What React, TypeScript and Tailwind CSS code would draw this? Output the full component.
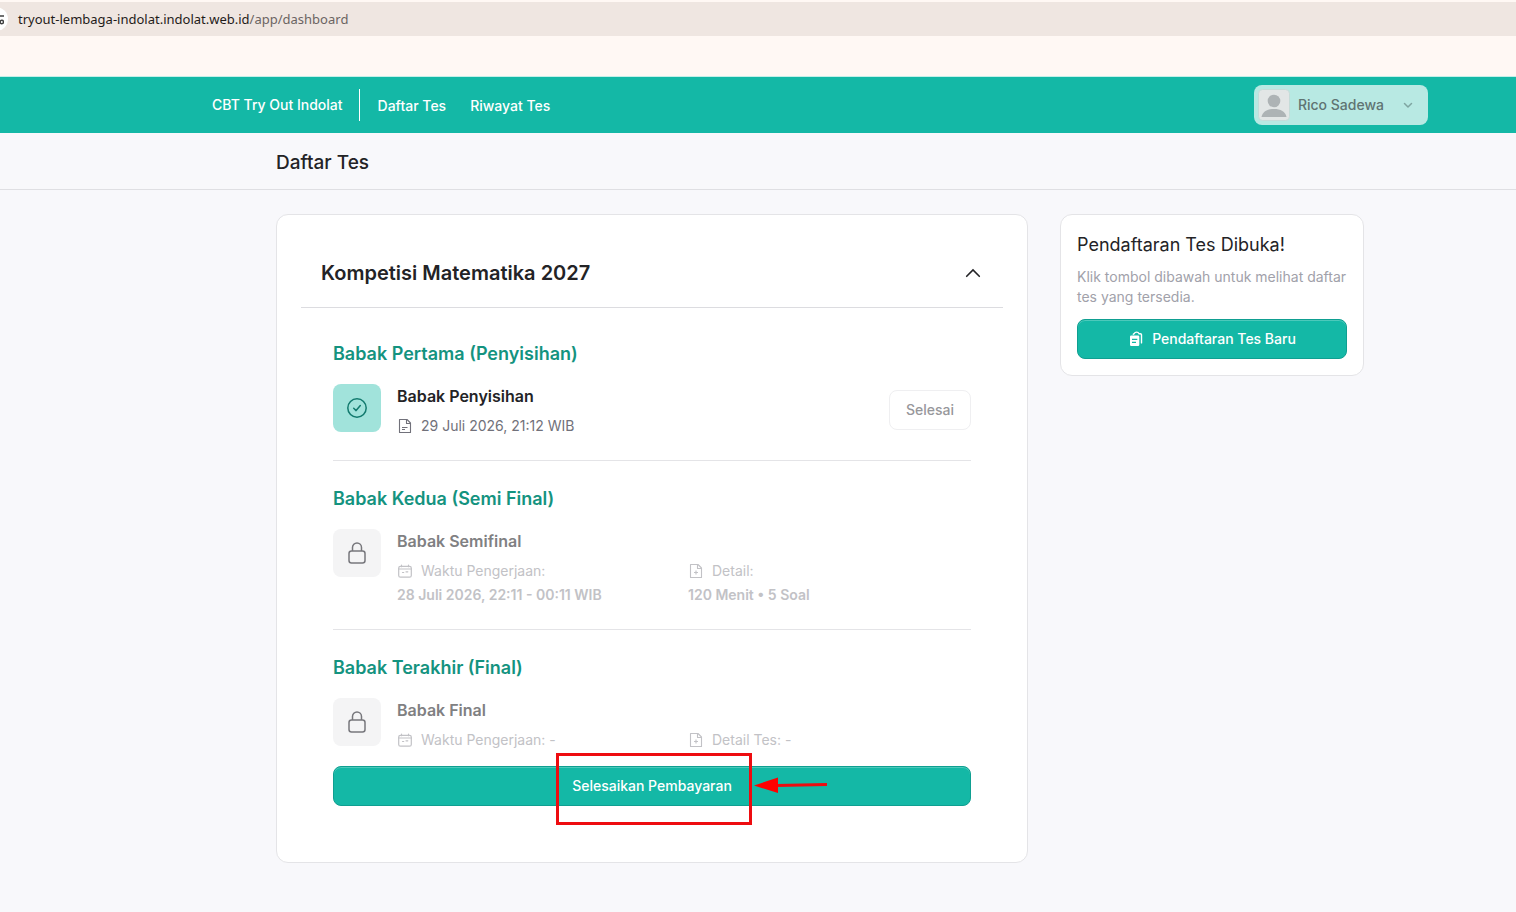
import type { ReactNode } from "react";

type Detail = {
  icon: ReactNode;
  label: string;
  value?: string;
};

type LockedRoundProps = {
  title: string;
  name: string;
  details: Detail[];
  children?: ReactNode;
};

const avatarPlaceholder = (
  <svg viewBox="0 0 32 32" aria-hidden="true" className="h-8 w-8">
    <rect x="0.5" y="0.5" width="31" height="31" rx="4" fill="#e2e6e6" stroke="#c5dcd9" />
    <circle cx="16" cy="12" r="6.3" fill="#adb3b5" />
    <path d="M3.5 28c1-5.5 6-8 12.500-8s11.500 2.500 12.500 8z" fill="#adb3b5" />
  </svg>
);

const checkIcon = (
  <svg viewBox="0 0 24 24" fill="none" stroke="currentColor" strokeWidth="1.5" aria-hidden="true" className="h-6 w-6">
    <circle cx="12" cy="12" r="9.2" />
    <path d="M8.700 12.300l2.400 2.300 4.200-5" strokeLinecap="round" strokeLinejoin="round" />
  </svg>
);

const lockIcon = (
  <svg viewBox="0 0 24 24" fill="none" stroke="currentColor" strokeWidth="1.5" aria-hidden="true" className="h-6 w-6">
    <rect x="4" y="10" width="16" height="12" rx="2.5" />
    <path d="M7.5 10V6.500a4.500 4.500 0 0 1 9 0V10" />
  </svg>
);

const fileIcon = (
  <svg viewBox="0 0 16 16" fill="none" stroke="currentColor" strokeWidth="1.1" strokeLinejoin="round" aria-hidden="true" className="h-4 w-4">
    <path d="M2.5 1.500h7.500l3.500 3.500v9.500h-11z" />
    <path d="M9.5 1.500v4h4M5 9.500h5.500M5 11.500h3" />
  </svg>
);

const filePlusIcon = (
  <svg viewBox="0 0 16 16" fill="none" stroke="currentColor" strokeWidth="1.1" strokeLinejoin="round" aria-hidden="true" className="h-4 w-4">
    <path d="M2.5 1.500h7.500l3.500 3.500v9.500h-11z" />
    <path d="M9.5 1.500v4h4M8 7.500v4M6 9.500h4" />
  </svg>
);

const calendarIcon = (
  <svg viewBox="0 0 16 16" fill="none" stroke="currentColor" strokeWidth="1.2" strokeLinecap="round" aria-hidden="true" className="h-4 w-4">
    <rect x="1.7" y="3.3" width="12.6" height="10.900" rx="1.800" />
    <path d="M4.500 2.200v1.500M11.500 2.200v1.500M1.700 6h12.600M5.500 9.500h1.200M9 8.800h1.800" />
  </svg>
);

const clipboardsIcon = (
  <svg viewBox="0 0 16 16" fill="none" aria-hidden="true" className="h-4 w-4">
    <path
      fillRule="evenodd"
      clipRule="evenodd"
      fill="currentColor"
      d="M3.200 4.600h6.900a1.200 1.200 0 0 1 1.200 1.200v8a1.200 1.200 0 0 1-1.200 1.200H3.200A1.200 1.200 0 0 1 2 13.800v-8a1.200 1.200 0 0 1 1.200-1.200zM4 7.700V9h5.300V7.700zM4 10.800v1.300h4v-1.300z"
    />
    <path
      d="M5.300 3.300a1 1 0 0 1 .8-.6 2.800 2.800 0 0 1 5 0h1.200a1.200 1.200 0 0 1 1.200 1.200v8"
      stroke="currentColor"
      strokeWidth="1.4"
      strokeLinecap="round"
    />
  </svg>
);

const primaryButton =
  "flex h-10 w-full items-center justify-center rounded-lg border border-[#0f9f91] bg-[#14b8a6] text-sm font-medium text-white shadow-[inset_0_1px_0_#4cc9bb] hover:bg-teal-600";

function AddressBar() {
  return (
    <div className="bg-[#fff8f4] pt-0.5 pb-10">
      <div className="flex h-[34px] items-center overflow-hidden bg-[#efe6e1]">
        <span className="-ml-4 flex h-6 w-6 shrink-0 items-center justify-end rounded-full bg-white pr-1 text-neutral-700">
          <svg viewBox="0 0 12 12" fill="none" stroke="currentColor" strokeWidth="1.5" aria-hidden="true" className="h-3 w-3">
            <path d="M6 3h6M0 9h6" />
            <circle cx="3" cy="3" r="1.7" />
            <circle cx="9.8" cy="9" r="1.7" />
          </svg>
        </span>
        <span className="ml-2.5 pt-0.5 font-['Noto_Sans',sans-serif] text-[13px] text-[#1f1b19]">
          tryout-lembaga-indolat.indolat.web.id<span className="text-[#6b6462]">/app/dashboard</span>
        </span>
      </div>
    </div>
  );
}

function Nav() {
  return (
    <nav className="border-t border-[#c4efe8] bg-[#14b8a6] pl-[124px]">
      <div className="mx-auto flex h-14 max-w-7xl items-center justify-between px-8 text-sm font-medium text-white">
        <div className="flex items-center">
          <a href="#" className="border-r border-white py-1.5 pr-4">
            CBT Try Out Indolat
          </a>
          <a href="#daftar" className="ml-[18px] pt-0.5">
            Daftar Tes
          </a>
          <a href="#riwayat" className="ml-6 pt-0.5">
            Riwayat Tes
          </a>
        </div>
        <button
          type="button"
          className="flex h-10 items-center rounded-lg bg-[#b8e9e3] pr-3 pl-1 text-sm font-medium text-[#5f7472]"
        >
          {avatarPlaceholder}
          <span className="ml-2">Rico Sadewa</span>
          <svg viewBox="0 0 16 16" fill="none" stroke="currentColor" strokeWidth="1.5" aria-hidden="true" className="ml-4 h-4 w-4 text-[#7fa5a1]">
            <path d="M4.500 6.500L8 10l3.500-3.500" strokeLinecap="round" strokeLinejoin="round" />
          </svg>
        </button>
      </div>
    </nav>
  );
}

function RoundTitle({ children }: { children: ReactNode }) {
  return <h3 className="mb-4 text-lg font-semibold text-[#14937f]">{children}</h3>;
}

function LockedRound({ title, name, details, children }: LockedRoundProps) {
  return (
    <section className="pt-6">
      <RoundTitle>{title}</RoundTitle>
      <div className="flex gap-4">
        <div className="flex h-12 w-12 shrink-0 items-center justify-center rounded-lg bg-[#f4f4f5] text-[#77777c]">
          {lockIcon}
        </div>
        <div className="flex-1">
          <h4 className="font-semibold text-[#808082]">{name}</h4>
          <div className="mt-2 grid grid-cols-2 gap-2 text-sm text-[#c2c2c6]">
            {details.map((detail) => (
              <div key={detail.label}>
                <p className="flex items-center gap-2">
                  {detail.icon}
                  {detail.label}
                </p>
                {detail.value ? <p className="mt-1 font-semibold">{detail.value}</p> : null}
              </div>
            ))}
          </div>
        </div>
      </div>
      {children}
    </section>
  );
}

function PaymentHighlight() {
  return (
    <div className="pointer-events-none absolute -top-[13px] left-1/2 -ml-24 h-[72px] w-[196px] border-3 border-[#ee0c10]">
      <svg viewBox="0 0 74 18" aria-hidden="true" className="absolute top-5 left-[195px] h-[18px] w-[74px] max-w-none">
        <path d="M22 9.500L73 8.500" stroke="#ee0c10" strokeWidth="3" />
        <path d="M0 9.500L24 1.500v15.500z" fill="#ff0000" />
      </svg>
    </div>
  );
}

function CompetitionCard() {
  return (
    <div className="rounded-xl border border-[#e4e4e7] bg-white p-6">
      <button
        type="button"
        aria-expanded="true"
        className="flex w-full items-center justify-between border-b border-[#dcdce0] px-5 py-5 text-left text-xl font-semibold text-[#232326]"
      >
        Kompetisi Matematika 2027
        <svg viewBox="0 0 20 20" fill="none" stroke="currentColor" strokeWidth="1.6" aria-hidden="true" className="h-5 w-5">
          <path d="M3.700 13.300L10 7l6.300 6.300" strokeLinecap="round" />
        </svg>
      </button>

      <div className="p-8">
        <section className="border-b border-[#e4e4e7] pb-6">
          <RoundTitle>Babak Pertama (Penyisihan)</RoundTitle>
          <div className="flex items-center gap-4">
            <div className="flex h-12 w-12 shrink-0 items-center justify-center self-start rounded-lg bg-[#a1e3db] text-[#127a6e]">
              {checkIcon}
            </div>
            <div className="flex-1">
              <h4 className="font-semibold text-[#232326]">Babak Penyisihan</h4>
              <p className="mt-2 flex items-center gap-2 text-sm text-[#71717a]">
                {fileIcon}
                29 Juli 2026, 21:12 WIB
              </p>
            </div>
            <button type="button" className="h-10 rounded-lg border border-[#efeff1] px-4 text-sm font-medium text-[#97979b]">
              Selesai
            </button>
          </div>
        </section>

        <div className="border-b border-[#e4e4e7] pb-6">
          <LockedRound
            title="Babak Kedua (Semi Final)"
            name="Babak Semifinal"
            details={[
              { icon: calendarIcon, label: "Waktu Pengerjaan:", value: "28 Juli 2026, 22:11 - 00:11 WIB" },
              { icon: filePlusIcon, label: "Detail:", value: "120 Menit • 5 Soal" },
            ]}
          />
        </div>

        <LockedRound
          title="Babak Terakhir (Final)"
          name="Babak Final"
          details={[
            { icon: calendarIcon, label: "Waktu Pengerjaan: -" },
            { icon: filePlusIcon, label: "Detail Tes: -" },
          ]}
        >
          <div className="relative mt-4">
            <button type="button" className={primaryButton}>
              Selesaikan Pembayaran
            </button>
            <PaymentHighlight />
          </div>
        </LockedRound>
      </div>
    </div>
  );
}

function RegistrationCard() {
  return (
    <aside className="rounded-xl border border-[#e4e4e7] bg-white p-4">
      <h2 className="text-lg text-[#232326]">Pendaftaran Tes Dibuka!</h2>
      <p className="mt-2 text-sm text-[#a1a1aa]">Klik tombol dibawah untuk melihat daftar tes yang tersedia.</p>
      <button type="button" className={`mt-3 gap-2 ${primaryButton}`}>
        {clipboardsIcon}
        Pendaftaran Tes Baru
      </button>
    </aside>
  );
}

export default function App() {
  return (
    <div className="min-h-screen bg-[#f8f8fb] font-[Inter,sans-serif]">
      <AddressBar />
      <Nav />
      <header className="border-b border-[#dfdfe3] pl-[124px]">
        <div className="mx-auto max-w-6xl px-8 pt-4 pb-3">
          <h1 className="text-[19px] leading-7 font-medium text-[#232326]">Daftar Tes</h1>
        </div>
      </header>
      <main className="pl-[124px]">
        <div className="mx-auto grid max-w-6xl grid-cols-[minmax(0,1fr)_304px] items-start gap-8 px-8 py-6">
          <CompetitionCard />
          <RegistrationCard />
        </div>
      </main>
    </div>
  );
}
